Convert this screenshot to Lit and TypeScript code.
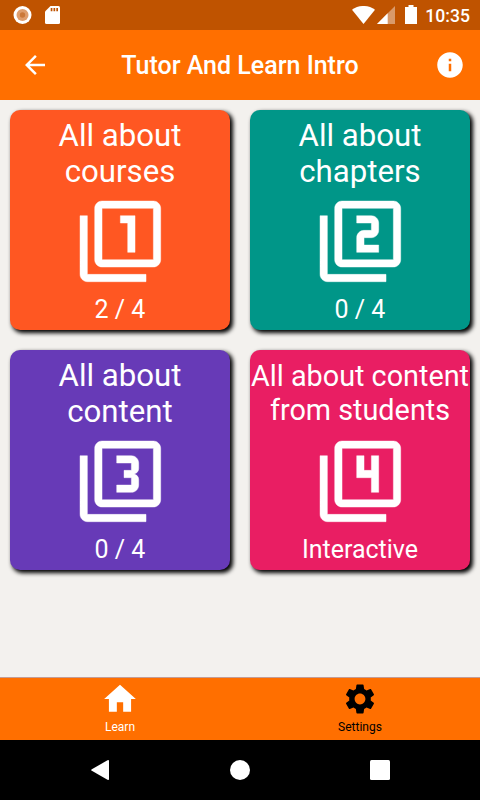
import { LitElement, html, css, svg } from "lit";
import { customElement, property } from "lit/decorators.js";

const DIGITS: Record<number, string> = {
  1: "M14 15h2V5h-4v2h2z",
  2: "M17 13h-4v-2h2c1.1 0 2-.89 2-2V7c0-1.11-.9-2-2-2h-4v2h4v2h-2c-1.1 0-2 .89-2 2v4h6v-2z",
  3: "M17 13v-1.5c0-.83-.67-1.5-1.5-1.5.83 0 1.5-.67 1.5-1.5V7c0-1.11-.9-2-2-2h-4v2h4v2h-2v2h2v2h-4v2h4c1.1 0 2-.89 2-2z",
  4: "M15 15h2V5h-2v4h-2V5h-2v6h4v4z",
};

interface Topic {
  lines: string[];
  status: string;
  tone: string;
  compact?: boolean;
}

const TOPICS: Topic[] = [
  { lines: ["All about", "courses"], status: "2 / 4", tone: "#ff5722" },
  { lines: ["All about", "chapters"], status: "0 / 4", tone: "#009688" },
  { lines: ["All about", "content"], status: "0 / 4", tone: "#673ab7" },
  { lines: ["All about content", "from students"], status: "Interactive", tone: "#e91e63", compact: true },
];

@customElement("topic-card")
export class TopicCard extends LitElement {
  @property({ attribute: false }) topic!: Topic;
  @property({ type: Number }) index = 1;

  static styles = css`
    :host { display: block; }
    .card {
      box-sizing: border-box;
      height: 220px;
      border-radius: 10px;
      box-shadow: 2.5px 2.5px 4px #000;
      color: #fff;
      display: flex;
      flex-direction: column;
      align-items: center;
    }
    .title {
      height: 72px;
      margin-top: 8px;
      font-size: 31.2px;
      line-height: 36px;
      text-align: center;
      white-space: nowrap;
    }
    .title.compact { font-size: 28.8px; line-height: 34px; padding-top: 1px; height: 71px; }
    .icon { width: 88px; height: 88px; margin-top: 7px; fill: #fff; stroke: #fff; stroke-width: 0.12px; overflow: visible; }
    .status { font-size: 25px; line-height: 30px; margin-top: 10px; }
  `;

  render() {
    const t = this.topic;
    return html`
      <div class="card" style="background:${t.tone}">
        <div class="title ${t.compact ? "compact" : ""}">${t.lines.map((l) => html`<div>${l}</div>`)}</div>
        <svg class="icon" viewBox="-0.1 -0.1 24 24">
          <path d="M3 5H1v16c0 1.1.9 2 2 2h16v-2H3V5zM21 1H7c-1.1 0-2 .9-2 2v14c0 1.1.9 2 2 2h14c1.1 0 2-.9 2-2V3c0-1.1-.9-2-2-2zm0 16H7V3h14v14z" />
          ${svg`<path d=${DIGITS[this.index]} />`}
        </svg>
        <div class="status">${t.status}</div>
      </div>
    `;
  }
}

@customElement("app-root")
export class AppRoot extends LitElement {
  static styles = css`
    :host {
      display: flex;
      flex-direction: column;
      width: 480px;
      height: 800px;
      overflow: hidden;
      background: #f3f1ee;
      font-family: Roboto, sans-serif;
      color: #fff;
    }
    svg { display: block; fill: #fff; flex: none; }
    .status { height: 30px; background: #bf5300; display: flex; align-items: center; padding: 0 10px 0 13px; flex: none; }
    .record { margin-right: 13px; }
    .spacer { flex: 1; }
    .wifi { margin-right: 2px; }
    .signal { margin-right: 10px; }
    .battery { margin-right: 8px; margin-bottom: 1px; }
    .clock { font-size: 17.6px; font-weight: 500; line-height: 30px; padding-top: 2px; }
    .header {
      height: 70px; flex: none; background: #ff6f00;
      display: grid; grid-template-columns: 70px 1fr 60px;
      align-items: center; justify-items: center;
      box-sizing: border-box; 
    }
    .heading { font-size: 25px; font-weight: 500; line-height: 30px; white-space: nowrap; margin: 2px 10px 0 0; }
    .cards { flex: 1; display: grid; grid-template-columns: 220px 220px; gap: 20px; padding: 10px; align-content: start; }
    .tabs { height: 63px; flex: none; background: #ff6f00; display: grid; grid-template-columns: 1fr 1fr; border-top: 1px solid #c39c96; box-sizing: border-box; }
    .tab { display: flex; flex-direction: column; align-items: center; font-size: 12px; line-height: 14px; }
    .tab svg { margin-top: 2px; }
    .label { margin-top: 2px; }
    .active { color: #fff; }
    .idle { color: #000; }
    .idle svg { fill: #000; }
    .system { height: 60px; flex: none; background: #000; display: flex; align-items: center; justify-content: center; gap: 120px; }
  `;

  render() {
    return html`
      <div class="status">
        <svg class="record" width="19" height="18" viewBox="0 0 19 18">
          <circle cx="9.5" cy="9" r="9" />
          <circle cx="9.5" cy="9" r="6" fill="#df9d6c" />
          <circle cx="9.5" cy="9" r="2.7" fill="#cb7839" />
        </svg>
        <svg width="15" height="18" viewBox="0 0 15 18">
          <path d="M5.5 0H13.5Q15 0 15 1.500V16.500Q15 18 13.500 18H1.500Q0 18 0 16.500V5.500Z" />
          <path d="M5.700 2h1.700v3.300H5.700zM8.500 2h1.700v3.300H8.500zM11.300 2H13v3.300h-1.700z" fill="#bf5300" />
        </svg>
        <span class="spacer"></span>
        <svg class="wifi" width="23" height="18" viewBox="0 0 23 18"><path d="M0 3.800C6.500-1.300 16.500-1.300 23 3.800L11.500 18z" /></svg>
        <svg class="signal" width="18" height="18" viewBox="0 0 18 18">
          <path d="M0 18L18 0V18z" fill="#d99a6a" />
          <path d="M0 18L10.700 7.300V18z" />
        </svg>
        <svg class="battery" width="12" height="19" viewBox="0 0 12 19"><path d="M3.500 0h5v2H12v17H0V2h3.500z" /></svg>
        <span class="clock">10:35</span>
      </div>
      <header class="header">
        <svg width="30" height="30" viewBox="0 0 24 24"><path d="M20 11H7.830l5.590-5.590L12 4l-8 8 8 8 1.410-1.410L7.830 13H20v-2z" /></svg>
        <h1 class="heading">Tutor And Learn Intro</h1>
        <svg width="30" height="30" viewBox="0 0 24 24"><path d="M12 1.800C6.370 1.800 1.800 6.370 1.800 12S6.370 22.200 12 22.200 22.200 17.630 22.200 12 17.630 1.800 12 1.800zm1 15.200h-2v-6h2v6zm0-8h-2V7h2v2z" /></svg>
      </header>
      <main class="cards">
        ${TOPICS.map((t, i) => html`<topic-card .topic=${t} .index=${i + 1}></topic-card>`)}
      </main>
      <nav class="tabs">
        <div class="tab active">
          <svg width="38" height="38" viewBox="0 0 24 24"><path d="M10 20v-6h4v6h5v-8h3L12 3 2 12h3v8z" /></svg>
          <span class="label">Learn</span>
        </div>
        <div class="tab idle">
          <svg width="36" height="38" viewBox="0 0 24 24"><path d="M19.140 12.940c.04-.3.06-.61.06-.94 0-.32-.02-.64-.07-.94l2.030-1.580c.18-.14.23-.41.12-.61l-1.920-3.320c-.12-.22-.37-.29-.59-.22l-2.390.96c-.5-.38-1.030-.7-1.620-.94l-.36-2.540c-.04-.24-.24-.41-.48-.41h-3.840c-.24 0-.43.17-.47.41l-.36 2.540c-.59.24-1.130.57-1.620.94l-2.390-.96c-.22-.08-.47 0-.59.22L2.740 8.870c-.12.21-.08.47.12.61l2.030 1.580c-.05.3-.09.63-.09.94s.02.64.07.94l-2.030 1.580c-.18.14-.23.41-.12.61l1.920 3.320c.12.22.37.29.59.22l2.390-.96c.5.38 1.030.7 1.620.94l.36 2.540c.05.24.24.41.48.41h3.840c.24 0 .44-.17.47-.41l.36-2.540c.59-.24 1.130-.56 1.620-.94l2.390.96c.22.08.47 0 .59-.22l1.920-3.320c.12-.22.07-.47-.12-.61l-2.010-1.580zM12 15.600c-1.980 0-3.600-1.620-3.600-3.600s1.620-3.600 3.600-3.600 3.600 1.620 3.600 3.600-1.620 3.600-3.600 3.600z" /></svg>
          <span class="label">Settings</span>
        </div>
      </nav>
      <footer class="system">
        <svg width="20" height="22" viewBox="0 0 20 22"><path d="M17.500 1.300Q19 .5 19 2V20Q19 21.500 17.500 20.700L1.800 11.800Q.5 11 1.800 10.200Z" /></svg>
        <svg width="20" height="20" viewBox="0 0 20 20"><circle cx="10" cy="10" r="10" /></svg>
        <svg width="20" height="20" viewBox="0 0 20 20"><rect width="20" height="20" rx="1.500" /></svg>
      </footer>
    `;
  }
}
